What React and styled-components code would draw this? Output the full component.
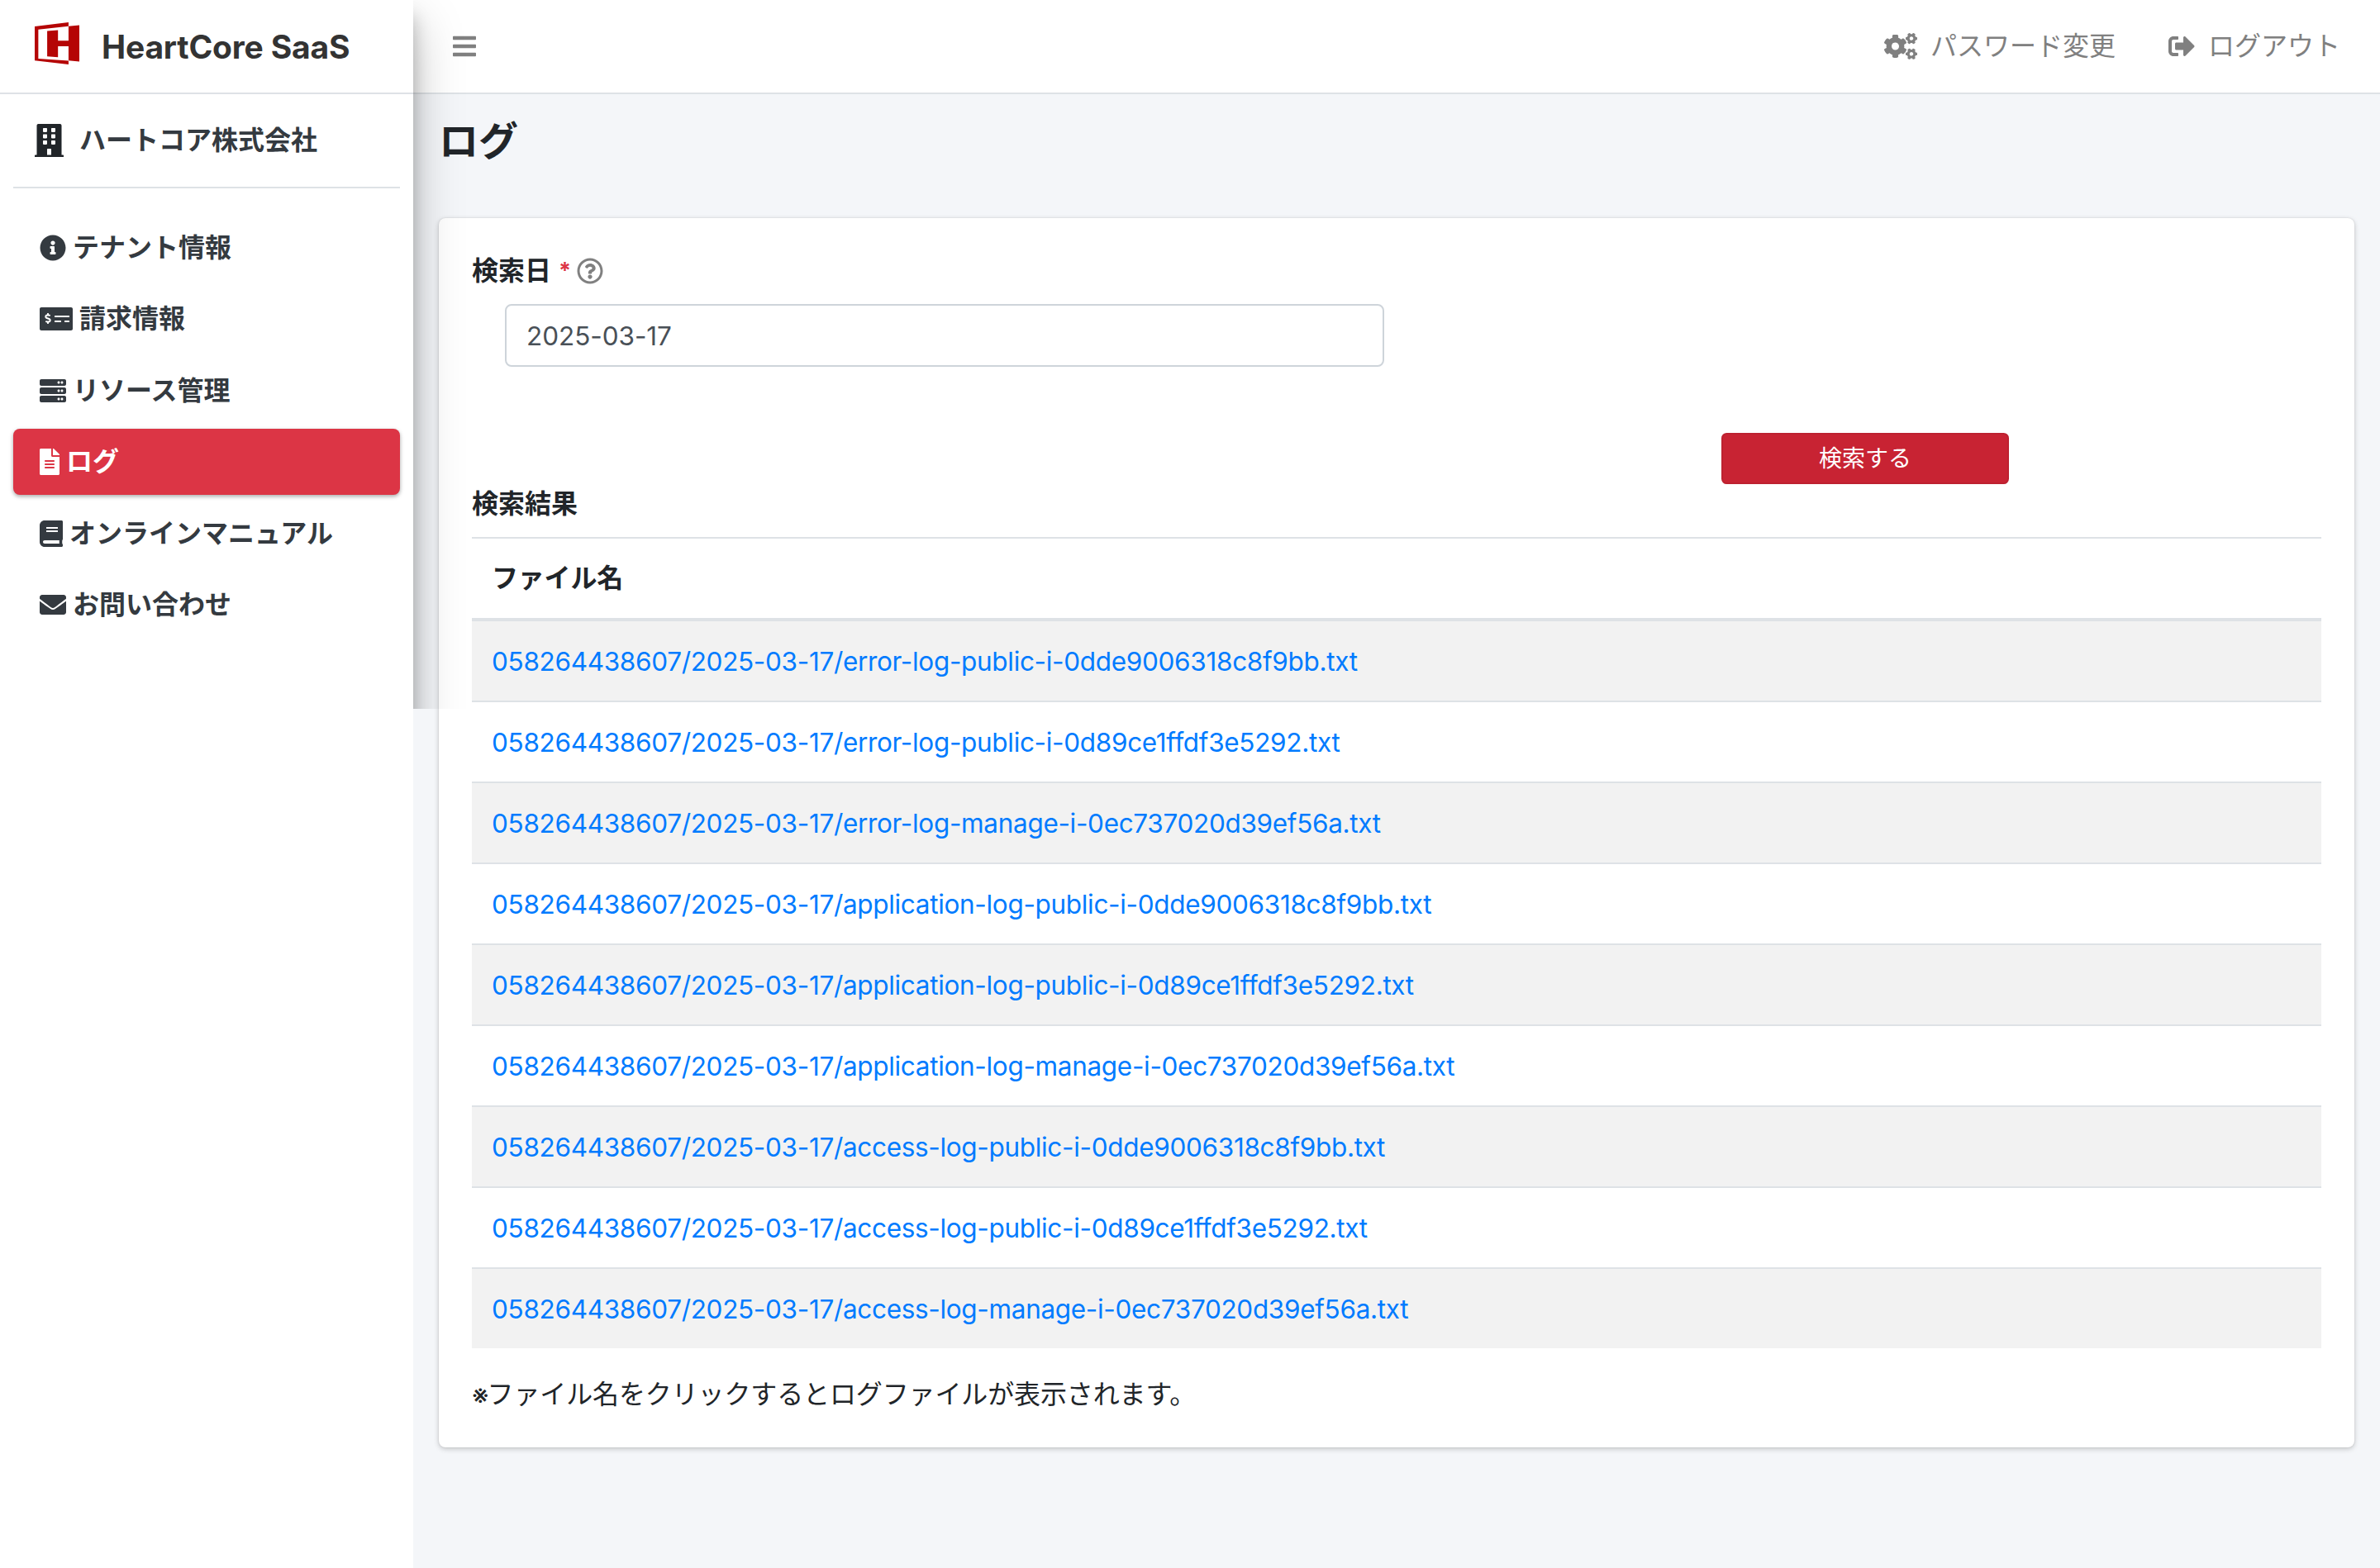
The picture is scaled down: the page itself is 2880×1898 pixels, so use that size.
import React, { useState } from "react"
import styled, { createGlobalStyle } from "styled-components"
import {
  FaBars,
  FaBook,
  FaBuilding,
  FaCogs,
  FaEnvelope,
  FaFileAlt,
  FaInfoCircle,
  FaMoneyCheckAlt,
  FaRegQuestionCircle,
  FaServer,
  FaSignOutAlt,
} from "react-icons/fa"


const GlobalStyle = createGlobalStyle`
  * {
    box-sizing: border-box;
  }
  body {
    margin: 0;
    background-color: #f4f6f9;
    color: #212529;
    font-family: Inter, "Noto Sans CJK JP", sans-serif;
    font-size: 32px;
    line-height: 48px;
  }
`

const Icon = styled.svg`
  display: block;
  flex: none;
  width: ${({ $width }) => $width || 32}px;
  height: ${({ $height }) => $height || 32}px;
`

const Wrapper = styled.div`
  position: relative;
  display: flex;
  height: 1898px;
  overflow: hidden;
`

const Sidebar = styled.aside`
  flex: none;
  width: 500px;
  background-color: #fff;
`

// sidebar shadow, it only reaches down to the first part of the page
const SidebarShadow = styled.div`
  position: absolute;
  top: 0;
  left: 500px;
  width: 120px;
  height: 858px;
  overflow: hidden;
  pointer-events: none;

  &::before {
    content: "";
    position: absolute;
    top: 0;
    left: -500px;
    width: 500px;
    height: 1898px;
    box-shadow: 0 28px 56px rgba(0, 0, 0, 0.25), 0 20px 20px rgba(0, 0, 0, 0.22);
  }
`

const Brand = styled.div`
  display: flex;
  align-items: center;
  height: 114px;
  padding-left: 42px;
  border-bottom: 2px solid #dee2e6;
  color: #333;
  font-size: 39px;
  font-weight: 700;

  & svg {
    width: 54px;
    height: 51px;
    margin: -8px 27px 0 0;
  }
  & .brand__name {
    padding-top: 2px;
    letter-spacing: -0.18px;
  }
`

const Company = styled.div`
  display: flex;
  align-items: center;
  gap: 19px;
  height: 114px;
  margin: 0 16px;
  padding-left: 26px;
  border-bottom: 2px solid #dee2e6;
  font-weight: 700;

  & .company__name {
    color: #343a40;
  }
`

const Menu = styled.nav`
  display: flex;
  flex-direction: column;
  gap: 6.4px;
  padding: 32px 16px 0;
`

const MenuItem = styled.a`
  display: flex;
  align-items: center;
  gap: 8px;
  height: 80px;
  padding: 0 32px;
  border-radius: 8px;
  color: ${({ $active }) => ($active ? "#fff" : "#343a40")};
  background-color: ${({ $active }) => ($active ? "#dc3545" : "transparent")};
  box-shadow: ${({ $active }) =>
    $active ? "0 2px 6px rgba(0, 0, 0, 0.12), 0 2px 4px rgba(0, 0, 0, 0.24)" : "none"};
  font-weight: 700;
  cursor: pointer;
`

const Main = styled.main`
  flex: 1;
  min-width: 0;
`

const Navbar = styled.header`
  display: flex;
  align-items: center;
  justify-content: space-between;
  height: 114px;
  padding: 0 48px;
  border-bottom: 2px solid #dee2e6;
  background-color: #fff;
  color: #808080;
`

const NavLinks = styled.div`
  display: flex;
  gap: 64px;
`

const NavLink = styled.a`
  display: flex;
  align-items: center;
  gap: 16px;
  cursor: pointer;
`

const Content = styled.div`
  padding: 0 31px;
`

const Title = styled.h1`
  height: 150px;
  margin: 0;
  font-size: 48px;
  font-weight: 700;
  line-height: 114px;
`

const Card = styled.section`
  display: flex;
  flex-direction: column;
  padding: 40px;
  border-radius: 8px;
  background-color: #fff;
  box-shadow: 0 0 2px rgba(0, 0, 0, 0.125), 0 2px 6px rgba(0, 0, 0, 0.2);
`

const Label = styled.label`
  display: flex;
  align-items: center;
  margin-bottom: 16px;
  font-weight: 700;

  & .label__required {
    width: 31px;
    padding-left: 9px;
    color: #dc3545;
    font-size: 27px;
  }
  & svg {
    color: #808080;
  }
`

const DateInput = styled.input`
  width: 1064px;
  height: 76px;
  margin: 0 0 80px 40px;
  padding: 1px 24px 0;
  border: 2px solid #ced4da;
  border-radius: 8px;
  outline: none;
  color: #495057;
  font: inherit;
  font-size: 31.5px;
  letter-spacing: -0.05px;
`

const SearchButton = styled.button`
  align-self: flex-end;
  width: 348px;
  height: 62px;
  margin-right: 378px;
  padding: 0;
  border: 2px solid #bd2130;
  border-radius: 6.4px;
  background-color: #c82333;
  color: #fff;
  font: inherit;
  font-size: 28px;
  line-height: 42px;
`

const ResultTitle = styled.div`
  margin-bottom: 16px;
  font-weight: 700;
`

const Table = styled.table`
  width: 100%;
  margin-bottom: 32px;
  border-spacing: 0;

  & th {
    height: 102px;
    padding: 0 24px;
    border-top: 2px solid #dee2e6;
    border-bottom: 4px solid #dee2e6;
    text-align: left;
    letter-spacing: -0.2px;
  }
  & td {
    height: 98px;
    padding: 1px 24px 0;
    border-top: 2px solid #dee2e6;
  }
  & tbody tr:first-child td {
    height: 96px;
    border-top: 0;
  }
  & tbody tr:nth-child(odd) {
    background-color: #f2f2f2;
  }
`

const FileLink = styled.a`
  color: #007bff;
  font-size: 31.5px;
  letter-spacing: -0.32px;
  cursor: pointer;
`

const Note = styled.div`
  display: flex;
  height: 48px;
  letter-spacing: -0.12px;

  & .note__mark {
    width: 18.5px;
    font-size: 32px;
    line-height: 50px;
  }
`

const menus = [
  { name: "テナント情報", icon: FaInfoCircle, width: 32 },
  { name: "請求情報", icon: FaMoneyCheckAlt, width: 40 },
  { name: "リソース管理", icon: FaServer, width: 32 },
  { name: "ログ", icon: FaFileAlt, width: 24 },
  { name: "オンラインマニュアル", icon: FaBook, width: 28 },
  { name: "お問い合わせ", icon: FaEnvelope, width: 32 },
]

const files = [
  "error-log-public-i-0dde9006318c8f9bb.txt",
  "error-log-public-i-0d89ce1ffdf3e5292.txt",
  "error-log-manage-i-0ec737020d39ef56a.txt",
  "application-log-public-i-0dde9006318c8f9bb.txt",
  "application-log-public-i-0d89ce1ffdf3e5292.txt",
  "application-log-manage-i-0ec737020d39ef56a.txt",
  "access-log-public-i-0dde9006318c8f9bb.txt",
  "access-log-public-i-0d89ce1ffdf3e5292.txt",
  "access-log-manage-i-0ec737020d39ef56a.txt",
]

const Logo = () => (
  <svg viewBox="0 0 161 151" preserveAspectRatio="none" fill="#b50505">
    <path d="M0 15 L122 0 V14 L13 26 V130 L122 138 V151 L0 137 Z" />
    <path d="M45 31 L84 28 V66 H122 V14 L161 10 V141 L122 137 V86 H84 V125 L45 122 Z" />
  </svg>
)

const LogTable = ({ tenant, date }) => {
  return (
    <Table>
      <thead>
        <tr>
          <th>ファイル名</th>
        </tr>
      </thead>
      <tbody>
        {files.map((file) => (
          <tr key={file}>
            <td>
              <FileLink>{`${tenant}/${date}/${file}`}</FileLink>
            </td>
          </tr>
        ))}
      </tbody>
    </Table>
  )
}

const App = () => {
  const [active, setActive] = useState("ログ")
  const [date, setDate] = useState("2025-03-17")

  return (
    <Wrapper>
      <GlobalStyle />
      <Sidebar>
        <Brand>
          <Logo />
          <span className="brand__name">HeartCore SaaS</span>
        </Brand>
        <Company>
          <Icon as={FaBuilding} $width={35} $height={40} />
          <span className="company__name">ハートコア株式会社</span>
        </Company>
        <Menu>
          {menus.map((menu) => (
            <MenuItem
              key={menu.name}
              $active={menu.name === active}
              onClick={() => setActive(menu.name)}
            >
              <Icon as={menu.icon} $width={menu.width} />
              <span>{menu.name}</span>
            </MenuItem>
          ))}
        </Menu>
      </Sidebar>

      <Main>
        <Navbar>
          <Icon as={FaBars} $width={28} />
          <NavLinks>
            <NavLink>
              <Icon as={FaCogs} $width={40} />
              <span>パスワード変更</span>
            </NavLink>
            <NavLink>
              <Icon as={FaSignOutAlt} />
              <span>ログアウト</span>
            </NavLink>
          </NavLinks>
        </Navbar>
        <Content>
          <Title>ログ</Title>
          <Card>
            <Label>
              <span>検索日</span>
              <span className="label__required">*</span>
              <Icon as={FaRegQuestionCircle} />
            </Label>
            <DateInput value={date} onChange={(e) => setDate(e.target.value)} />
            <SearchButton>検索する</SearchButton>
            <ResultTitle>検索結果</ResultTitle>
            <LogTable tenant="058264438607" date="2025-03-17" />
            <Note>
              <span className="note__mark">※</span>
              <span>ファイル名をクリックするとログファイルが表示されます。</span>
            </Note>
          </Card>
        </Content>
      </Main>
      <SidebarShadow />
    </Wrapper>
  )
}

export default App
